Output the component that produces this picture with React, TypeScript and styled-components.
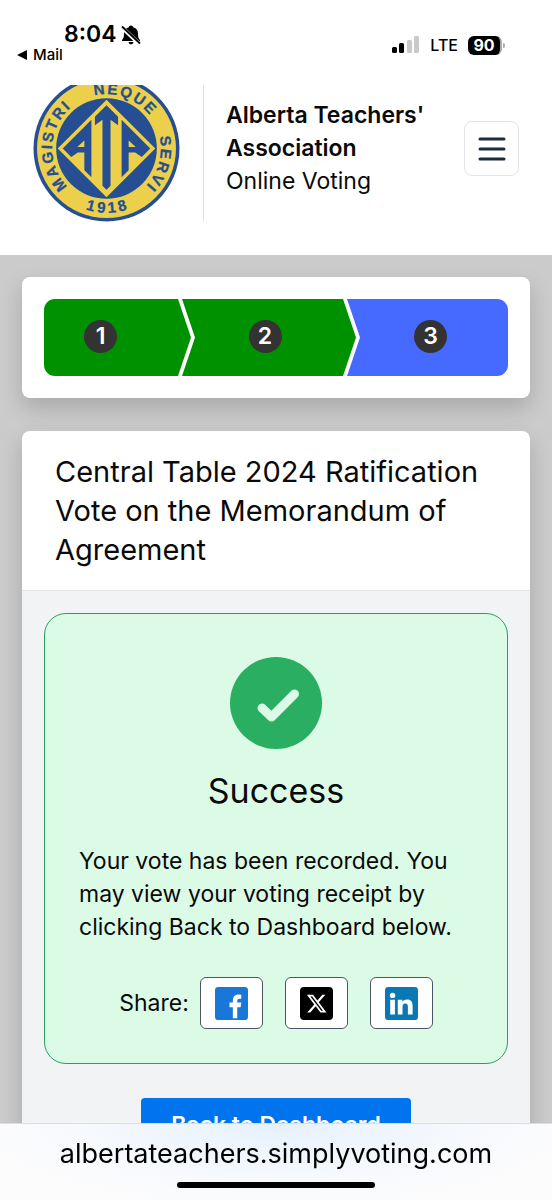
import React from "react";
import styled, { createGlobalStyle } from "styled-components";

const GlobalStyle = createGlobalStyle`
  *, *::before, *::after { box-sizing: border-box; }
  body {
    margin: 0;
    background: #cbcbcb;
    color: #0a0a0a;
    font-family: Inter, "Open Sans", sans-serif;
    font-size: 23px;
    line-height: 33px;
  }
`;

const Page = styled.div`
  display: flex;
  flex-direction: column;
  min-height: 100vh;
`;

const StatusBar = styled.div`
  position: relative;
  z-index: 2;
  display: flex;
  justify-content: space-between;
  align-items: flex-start;
  padding: 22px 47px 23px 17px;
  background: #fff;
  color: #000;
`;

const StatusLeft = styled.div`
  display: flex;
  flex-direction: column;
`;

const Clock = styled.div`
  display: flex;
  align-items: center;
  gap: 4px;
  padding-left: 47px;
  font-size: 23px;
  font-weight: 600;
  line-height: 25px;
`;

const BackLink = styled.a`
  display: flex;
  align-items: center;
  gap: 6px;
  color: inherit;
  font-size: 15px;
  font-weight: 500;
  line-height: 15px;
  text-decoration: none;
`;

const StatusRight = styled.div`
  display: flex;
  align-items: center;
  gap: 10px;
  padding-top: 12px;
  font-size: 16px;
  font-weight: 500;
  line-height: 22px;
`;

const Battery = styled.span`
  display: flex;
  align-items: center;
  gap: 1px;
`;

const BatteryLevel = styled.span`
  width: 34px;
  border-right: 2px solid #a9a9a9;
  border-radius: 6px;
  background: #000;
  color: #fff;
  font-size: 16px;
  font-weight: 700;
  line-height: 19px;
  text-align: center;
`;

const BatteryCap = styled.span`
  width: 2px;
  height: 5px;
  border-radius: 0 2px 2px 0;
  background: #a9a9a9;
`;

const Header = styled.header`
  display: flex;
  align-items: center;
  margin-top: -10px;
  padding: 0 33px 33px;
  background: #fff;
`;

const Brand = styled.div`
  display: flex;
  flex: none;
  padding-right: 23px;
  border-right: 1px solid #dfe1e8;
`;

const Organization = styled.div`
  flex: 1;
  padding: 0 22px;
`;

const OrgName = styled.div`
  max-width: 210px;
  font-weight: 600;
`;

const MenuButton = styled.button`
  display: grid;
  place-items: center;
  flex: none;
  width: 55px;
  height: 55px;
  padding: 0;
  border: 1px solid #e3e4ea;
  border-radius: 8px;
  background: #fff;
`;

const Main = styled.main`
  display: flex;
  flex: 1;
  flex-direction: column;
  gap: 33px;
  padding: 22px 22px 0;
`;

const Card = styled.section`
  border-radius: 8px;
  background: #fff;
  box-shadow: 0 10px 22px rgba(0, 0, 0, 0.17);
`;

const ProgressCard = styled(Card)`
  padding: 22px;
`;

const Steps = styled.ol`
  display: grid;
  grid-template-columns: 138fr 165fr 161fr;
  margin: 0;
  padding: 0;
  overflow: hidden;
  border-radius: 11px;
  list-style: none;
`;

const Step = styled.li<{ $current?: boolean }>`
  display: flex;
  align-items: center;
  justify-content: center;
  height: 77px;
  margin-right: -9px;
  padding: 0 8px 3px 0;
  background: ${(p) => (p.$current ? "#4669ff" : "#009100")};
  clip-path: polygon(0 0, calc(100% - 13px) 0, 100% 50%, calc(100% - 13px) 100%, 0 100%, 13px 50%);

  &:first-child {
    padding-right: 34px;
    clip-path: polygon(0 0, calc(100% - 13px) 0, 100% 50%, calc(100% - 13px) 100%, 0 100%);
  }

  &:last-child {
    margin-right: 0;
    padding: 0 0 3px 6px;
    clip-path: polygon(0 0, 100% 0, 100% 100%, 0 100%, 13px 50%);
  }
`;

const StepNumber = styled.span`
  width: 33px;
  border-radius: 50%;
  background: #333;
  color: #fff;
  font-weight: 600;
  text-align: center;
`;

const VoteCard = styled(Card)`
  display: flex;
  flex: 1;
  flex-direction: column;
  border-radius: 8px 8px 0 0;
`;

const VoteTitle = styled.h1`
  margin: 0;
  padding: 21px 33px;
  border-bottom: 1px solid #e2e4e8;
  font-size: 29px;
  font-weight: 400;
  line-height: 39px;
`;

const VoteBody = styled.div`
  display: flex;
  flex: 1;
  flex-direction: column;
  align-items: center;
  gap: 34px;
  padding: 22px;
  background: #f2f3f5;
`;

const SuccessPanel = styled.div`
  display: flex;
  flex-direction: column;
  align-items: center;
  width: 100%;
  padding: 43px 34px 34px;
  border: 1px solid #2ba05c;
  border-radius: 22px;
  background: #dcfbe7;
`;

const SuccessTitle = styled.h2`
  margin: 22px 0 34px;
  font-size: 34px;
  font-weight: 400;
  line-height: 40px;
`;

const Message = styled.p`
  width: 100%;
  margin: 0 0 33px;
`;

const ShareRow = styled.div`
  display: flex;
  align-items: center;
  gap: 22px;
`;

const ShareLabel = styled.span`
  margin-right: -11px;
`;

const ShareLink = styled.a`
  display: grid;
  place-items: center;
  width: 63px;
  height: 52px;
  border: 1px solid #4b5563;
  border-radius: 6px;
  background: #fff;
`;

const DashboardButton = styled.button`
  padding: 11px 30px;
  border: 0;
  border-radius: 4px;
  background: #0073ee;
  color: #fff;
  font: inherit;
  font-weight: 600;
`;

const AddressBar = styled.footer`
  position: fixed;
  right: 0;
  bottom: 0;
  left: 0;
  display: flex;
  flex-direction: column;
  align-items: center;
  gap: 11px;
  padding: 13px 0 12px;
  border-top: 1px solid #dcdee2;
  background: radial-gradient(ellipse at 50% 0, #e6f1fd 0%, #f5f8fd 45%, #fcfcfd 75%);
  color: #000;
  font-size: 27px;
  line-height: 34px;
`;

const HomeIndicator = styled.div`
  width: 198px;
  height: 6px;
  border-radius: 3px;
  background: #000;
`;

const MutedBell = () => (
  <svg width="20" height="20" viewBox="0 0 20 20" aria-hidden="true">
    <path d="M10 0.500c1.300 0 2 .8 2.200 1.700C15.500 3 17 5.500 17 8.500c0 4 .8 5 2 6.500v1H1v-1C2.200 13.500 3 12.500 3 8.500 3 5.500 4.500 3 7.800 2.200 8 1.300 8.700 .5 10 .5zM7.500 17h5c-.3 1.600-1.200 2.300-2.500 2.300S7.800 18.600 7.500 17z" />
    <path d="M0 1.500 19 19.500" stroke="#fff" strokeWidth="4" />
    <path d="M1 1.500 19 18.500" stroke="#000" strokeWidth="1.800" />
  </svg>
);

const Signal = () => (
  <svg width="28" height="18" viewBox="0 0 28 18" aria-hidden="true">
    <rect x="0" y="11" width="5" height="6" rx="1.500" />
    <rect x="7" y="7" width="5" height="10" rx="1.500" />
    <rect x="15" y="4" width="5" height="13" rx="1.500" fill="#c9c9c9" />
    <rect x="22" y="0" width="5" height="17" rx="1.500" fill="#c9c9c9" />
  </svg>
);

const Seal = () => (
  <svg width="147" height="147" viewBox="0 0 146 146" role="img" aria-label="Alberta Teachers' Association seal">
    <defs>
      <path id="ring" d="M73 127a54 54 0 0 1 0-108a54 54 0 0 1 0 108" />
      <path id="ringBottom" d="M9 73a64 64 0 0 0 128 0" />
    </defs>
    <circle cx="73" cy="73" r="72.500" fill="#264f93" />
    <circle cx="73" cy="73" r="69" fill="#ecd04b" />
    <circle cx="73" cy="73" r="50" fill="#264f93" />
    <path d="M73 24.500 121.500 73 73 121.500 24.500 73z" fill="#ecd04b" />
    <g fill="#264f93">
      <path d="M73 30 84.500 41.500V50L77 44.500V110L73 114 69 110V44.500L61.500 50V41.500z" />
      <path d="M29.500 73 58 44.500V101.500L51 94.500V77H44.500L38 81.500zM44 71.500H51V65z" fillRule="evenodd" />
      <path d="M116.500 73 88 44.500V101.500L95 94.500V77H101.500L108 81.500zM102 71.500H95V65z" fillRule="evenodd" />
    </g>
    <g fill="#264f93" stroke="#264f93" strokeWidth="0.300" fontFamily='"Liberation Sans", sans-serif' fontSize="15" fontWeight="700">
      <text dx="0 2 2 2 2 2 2 2"><textPath href="#ring" startOffset="43">MAGISTRI</textPath></text>
      <text dx="0 2 2 2 2"><textPath href="#ring" startOffset="157">NEQUE</textPath></text>
      <text dx="0 2 2 2 2"><textPath href="#ring" startOffset="242">SERVI</textPath></text>
      <text dx="0 3 3 3" textAnchor="middle"><textPath href="#ringBottom" startOffset="50%">1918</textPath></text>
    </g>
  </svg>
);

const MenuIcon = () => (
  <svg width="28" height="24" viewBox="0 0 28 24" fill="none" stroke="#1f2b3a" strokeWidth="3" strokeLinecap="round" aria-hidden="true">
    <path d="M2 2H26M2 12H26M2 22H26" />
  </svg>
);

const SuccessIcon = () => (
  <svg width="92" height="92" viewBox="0 0 92 92" aria-hidden="true">
    <circle cx="46" cy="46" r="46" fill="#2aae62" />
    <path d="M32 51 41.500 60 64.500 37" fill="none" stroke="#dcfbe7" strokeWidth="9" strokeLinecap="round" strokeLinejoin="round" />
  </svg>
);

const FacebookIcon = () => (
  <svg width="33" height="33" viewBox="0 0 98 98" aria-hidden="true">
    <rect width="98" height="98" rx="10" fill="#1877d8" />
    <path d="M53 93V60H43V46H53V40C53 28 60 22 70 22Q74 22 78 23V35H72Q66 35 66 42V46H78L76 60H66V93z" fill="#fff" />
  </svg>
);

const XIcon = () => (
  <svg width="33" height="33" viewBox="0 0 98 98" aria-hidden="true">
    <rect width="98" height="98" rx="12" fill="#000" />
    <path transform="translate(17 17) scale(2.700)" fill="#fff" d="M18.244 2.250h3.308l-7.227 8.260 8.502 11.240H16.170l-5.214-6.817L4.990 21.750H1.680l7.730-8.835L1.254 2.250H8.080l4.713 6.231zm-1.161 17.520h1.833L7.084 4.126H5.117z" />
  </svg>
);

const LinkedInIcon = () => (
  <svg width="33" height="33" viewBox="0 0 98 98" aria-hidden="true">
    <rect width="98" height="98" rx="10" fill="#0a78b5" />
    <circle cx="22.500" cy="25" r="8" fill="#fff" />
    <path d="M15.500 38H29.500V82H15.500zM38 38H51.500V44C54 40 58 37 65 37C78 37 82 45 82 57V82H68V60C68 54 67 49 60.500 49C54 49 52 54 52 60V82H38z" fill="#fff" />
  </svg>
);

const shareTargets = [
  { name: "Facebook", Icon: FacebookIcon },
  { name: "X", Icon: XIcon },
  { name: "LinkedIn", Icon: LinkedInIcon },
];

export default function App() {
  return (
    <>
      <GlobalStyle />
      <Page>
        <StatusBar>
          <StatusLeft>
            <Clock>
              8:04
              <MutedBell />
            </Clock>
            <BackLink href="#mail">
              <svg width="10" height="10" viewBox="0 0 10 10" aria-hidden="true">
                <path d="M0 5 10 0V10z" />
              </svg>
              Mail
            </BackLink>
          </StatusLeft>
          <StatusRight>
            <Signal />
            LTE
            <Battery>
              <BatteryLevel>90</BatteryLevel>
              <BatteryCap />
            </Battery>
          </StatusRight>
        </StatusBar>

        <Header>
          <Brand>
            <Seal />
          </Brand>
          <Organization>
            <OrgName>Alberta Teachers' Association</OrgName>
            <div>Online Voting</div>
          </Organization>
          <MenuButton type="button" aria-label="Menu">
            <MenuIcon />
          </MenuButton>
        </Header>

        <Main>
          <ProgressCard aria-label="Voting progress">
            <Steps>
              <Step><StepNumber>1</StepNumber></Step>
              <Step><StepNumber>2</StepNumber></Step>
              <Step $current aria-current="step"><StepNumber>3</StepNumber></Step>
            </Steps>
          </ProgressCard>

          <VoteCard>
            <VoteTitle>Central Table 2024 Ratification Vote on the Memorandum of Agreement</VoteTitle>
            <VoteBody>
              <SuccessPanel>
                <SuccessIcon />
                <SuccessTitle>Success</SuccessTitle>
                <Message>
                  Your vote has been recorded. You may view your voting receipt by clicking Back to Dashboard below.
                </Message>
                <ShareRow>
                  <ShareLabel>Share:</ShareLabel>
                  {shareTargets.map(({ name, Icon }) => (
                    <ShareLink key={name} href={`#${name.toLowerCase()}`} aria-label={name}>
                      <Icon />
                    </ShareLink>
                  ))}
                </ShareRow>
              </SuccessPanel>
              <DashboardButton type="button">Back to Dashboard</DashboardButton>
            </VoteBody>
          </VoteCard>
        </Main>

        <AddressBar>
          <span>albertateachers.simplyvoting.com</span>
          <HomeIndicator />
        </AddressBar>
      </Page>
    </>
  );
}
